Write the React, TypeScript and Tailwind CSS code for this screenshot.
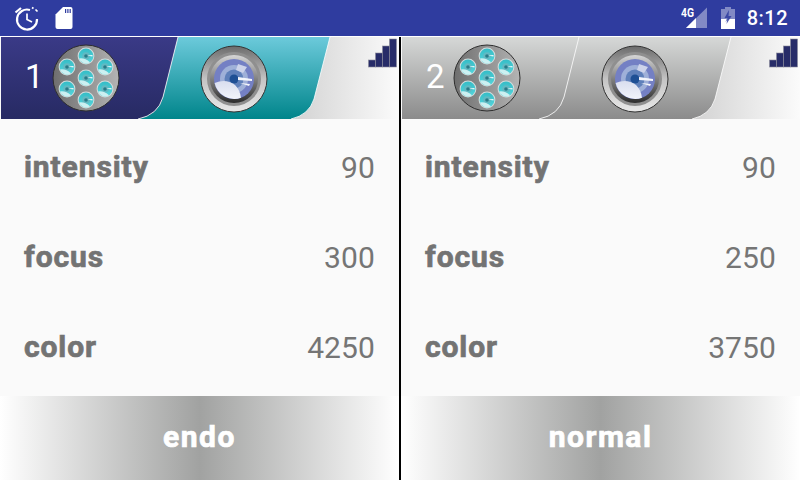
const PANELS = [
  { num: "1", active: true, mode: "endo", values: [["intensity", 90], ["focus", 300], ["color", 4250]] },
  { num: "2", active: false, mode: "normal", values: [["intensity", 90], ["focus", 250], ["color", 3750]] },
] as const;

const LENS_SPOTS = [
  [86, 19],
  [67, 30],
  [105, 30],
  [86, 41],
  [67, 52],
  [105, 52],
  [86, 63],
];

function SmallLens({ x, y, id }: { x: number; y: number; id: string }) {
  return (
    <g>
      <circle cx={x} cy={y} r={8.4} fill="#d4dcdc" />
      <circle cx={x} cy={y} r={7.4} fill={`url(#${id}-small)`} />
      <circle cx={x} cy={y} r={3.8} fill="#62b9c2" />
      <circle cx={x} cy={y} r={1.8} fill="#2a7a88" />
      <path d={`M${x - 7} ${y + 2.4} Q${x - 1} ${y + 1.5} ${x + 4} ${y + 6.2} A7.4 7.4 0 0 1 ${x - 7} ${y + 2.4}Z`} fill="#e2f6f6" opacity="0.85" />
      <path d={`M${x + 1} ${y - 0.5} L${x + 6.5} ${y - 1} L${x + 6.5} ${y + 0.4}Z`} fill="#ffffff" opacity="0.9" />
    </g>
  );
}

function HeaderArt({ id, active }: { id: string; active: boolean }) {
  return (
    <svg width="399" height="83" viewBox="0 0 399 83" className="block">
      <defs>
        <linearGradient id={`${id}-bg`} x1="0" x2="1" y1="0" y2="0">
          <stop offset="0.65" stopColor="#c6c6c6" />
          <stop offset="1" stopColor="#fbfbfb" />
        </linearGradient>
        <linearGradient id={`${id}-left`} x1="0" x2="0" y1="0" y2="1">
          <stop offset="0" stopColor={active ? "#3a3a87" : "#d6d8d7"} />
          <stop offset="1" stopColor={active ? "#272a63" : "#8b8b8b"} />
        </linearGradient>
        <linearGradient id={`${id}-mid`} x1="0" x2="0" y1="0" y2="1">
          <stop offset="0" stopColor={active ? "#6ccadb" : "#d6d8d7"} />
          <stop offset="1" stopColor={active ? "#00858b" : "#8b8b8b"} />
        </linearGradient>
        <linearGradient id={`${id}-disc`} x1="0" x2="1" y1="0" y2="0">
          <stop offset="0" stopColor="#6e6e6e" />
          <stop offset="1" stopColor="#b4b4b4" />
        </linearGradient>
        <linearGradient id={`${id}-small`} x1="0" x2="0" y1="0" y2="1">
          <stop offset="0" stopColor="#36bcc6" />
          <stop offset="1" stopColor="#55d6dc" />
        </linearGradient>
        <linearGradient id={`${id}-ring`} x1="0" x2="0" y1="0" y2="1">
          <stop offset="0" stopColor="#6b6b6b" />
          <stop offset="0.5" stopColor="#c4c4c4" />
          <stop offset="1" stopColor="#e8e8e8" />
        </linearGradient>
        <linearGradient id={`${id}-ring2`} x1="0" x2="0" y1="0" y2="1">
          <stop offset="0" stopColor="#d6d6d6" />
          <stop offset="1" stopColor="#2c2c2c" />
        </linearGradient>
        <linearGradient id={`${id}-glass`} x1="0" x2="0" y1="0" y2="1">
          <stop offset="0" stopColor="#d9deef" />
          <stop offset="1" stopColor="#f2f4fa" />
        </linearGradient>
      </defs>
      <rect x="1" width="398" height="82" fill={`url(#${id}-bg)`} />
      <path d="M178 0 H330 L314 62 Q309 78 291 82 H138 Q158 78 163 60 Z" fill={`url(#${id}-mid)`} />
      <path d="M1 0 H178 L163 60 Q158 78 138 82 H1 Z" fill={`url(#${id}-left)`} />
      <path d="M178 0 L163 60 Q158 78 138 82" fill="none" stroke="#ffffff" strokeWidth="0.8" />
      <path d="M330 0 L314 62 Q309 78 291 82" fill="none" stroke="#ffffff" strokeWidth="0.8" />

      <circle cx="86" cy="41" r="33" fill={`url(#${id}-disc)`} stroke="#2e2e2e" strokeWidth="1" />
      {LENS_SPOTS.map(([x, y]) => (
        <SmallLens key={`${x}-${y}`} x={x} y={y} id={id} />
      ))}

      <circle cx="234" cy="42" r="33" fill={`url(#${id}-ring)`} stroke="#333333" strokeWidth="1" />
      <circle cx="234" cy="42" r="27" fill="#8f8f8f" />
      <circle cx="234" cy="42" r="24" fill={`url(#${id}-ring2)`} />
      <circle cx="234" cy="42" r="20" fill="#7480c4" />
      <circle cx="234" cy="42" r="14" fill="#9fb0d8" />
      <circle cx="234" cy="42" r="9.5" fill="#5f80ba" />
      <circle cx="234" cy="42" r="4.5" fill="#1e4f94" />
      <path d="M214.6 46 Q226 41 235 48 Q240 53 241 60.7 A20 20 0 0 1 214.6 46Z" fill={`url(#${id}-glass)`} />
      <path d="M238 40 L252 42 L252 44 L238 43Z M240 46 L250 47 L249 49Z" fill="#f4f6fb" />
      <path d="M238 27 L247 30 L243 36 L236 33Z" fill="#cdd3ea" />

      <g fill="#272c68" stroke="#8a8a9a" strokeWidth="0.6">
        <rect x="368.5" y="23" width="7" height="7" />
        <rect x="375.5" y="16" width="7" height="14" />
        <rect x="382.5" y="9" width="7" height="21" />
        <rect x="389.5" y="2" width="7" height="28" />
      </g>
    </svg>
  );
}

function Panel({ panel, id }: { panel: (typeof PANELS)[number]; id: string }) {
  return (
    <div className="flex w-[399px] flex-col bg-[#fafafa]">
      <div className="relative h-[83px] shrink-0">
        <HeaderArt id={id} active={panel.active} />
        <span className="absolute left-[25px] top-[20px] font-['Roboto',sans-serif] text-[33px] leading-[40px] text-white">
          {panel.num}
        </span>
      </div>
      <div className="flex h-[276px] flex-col px-6 pt-[1px]">
        {panel.values.map(([label, value]) => (
          <div key={label} className="flex h-[90px] items-center justify-between">
            <span className="font-['Roboto',sans-serif] text-[30px] font-bold tracking-[0.9px] text-[#737373] [-webkit-text-stroke:0.7px_#737373]">{label}</span>
            <span className="pt-[2px] font-['Roboto',sans-serif] text-[30px] font-normal tracking-[0.1px] text-[#757575]">{value}</span>
          </div>
        ))}
      </div>
      <div className="flex h-[84px] items-center justify-center bg-[linear-gradient(90deg,#ffffff_0%,#a1a2a1_50%,#ffffff_100%)]">
        <span className="-mt-[3px] font-['Roboto',sans-serif] text-[30px] font-bold tracking-[1.5px] text-white [-webkit-text-stroke:0.7px_#ffffff]">{panel.mode}</span>
      </div>
    </div>
  );
}

function StatusBar() {
  return (
    <div className="flex h-9 items-center justify-between bg-[#2f3c9f] pl-[14px] pr-3">
      <div className="flex items-center gap-[15px]">
        <svg width="26" height="26" viewBox="0 0 26 26" fill="none" stroke="#ffffff" strokeWidth="2.2">
          <path d="M16 5 A10 10 0 1 0 23 14" />
          <path d="M13 8.5 V14.5 L18 17" strokeWidth="1.7" />
          <path d="M1.5 7.5 L7 3" />
          <path d="M18 2.5 L19.5 3.5 M21.5 4.5 L23.5 6.5" strokeWidth="1.7" />
        </svg>
        <svg width="18" height="22" viewBox="0 0 18 22">
          <path d="M8 0 H15.5 A2 2 0 0 1 17.5 2 V20 A2 2 0 0 1 15.5 22 H2.5 A2 2 0 0 1 0.5 20 V7.5 Z" fill="#ffffff" />
          <path d="M10 2 H11.2 V6 H10 Z M12.3 2 H13.5 V6 H12.3 Z M14.6 2 H15.8 V6 H14.6 Z" fill="#2f3c9f" />
        </svg>
      </div>
      <div className="flex items-center">
        <svg width="27" height="22" viewBox="0 0 27 22" className="mr-[13px]">
          <text x="0" y="10" fontFamily="Roboto, sans-serif" fontSize="12" fontWeight="700" textLength="13" lengthAdjust="spacingAndGlyphs" fill="#ffffff">4G</text>
          <path d="M26 0.5 V21 H5 Z" fill="#ffffff" opacity="0.4" />
          <path d="M15 11 V21 H5 Z" fill="#ffffff" />
        </svg>
        <svg width="14" height="22" viewBox="0 0 14 22" className="mr-[12px]">
          <path d="M4 0 H10 V2 H14 V22 H0 V2 H4 Z" fill="#ffffff" opacity="0.4" />
          <path d="M0 12 H5.5 L4.5 15 L8 11.5 L8.5 12 H14 V22 H0 Z" fill="#ffffff" />
          <path d="M8 3 L3.5 11 H6.5 L5.5 17 L10.5 9 H7.5 Z" fill="#2f3c9f" opacity="0.85" />
        </svg>
        <span className="font-['Roboto',sans-serif] text-[20px] font-medium tracking-[0.5px] text-white">8:12</span>
      </div>
    </div>
  );
}

export default function App() {
  return (
    <div className="flex h-[480px] w-[800px] flex-col overflow-hidden bg-white">
      <StatusBar />
      <div className="h-px bg-white" />
      <div className="flex flex-1">
        <Panel panel={PANELS[0]} id="p1" />
        <div className="w-[2px] bg-black" />
        <Panel panel={PANELS[1]} id="p2" />
      </div>
    </div>
  );
}
